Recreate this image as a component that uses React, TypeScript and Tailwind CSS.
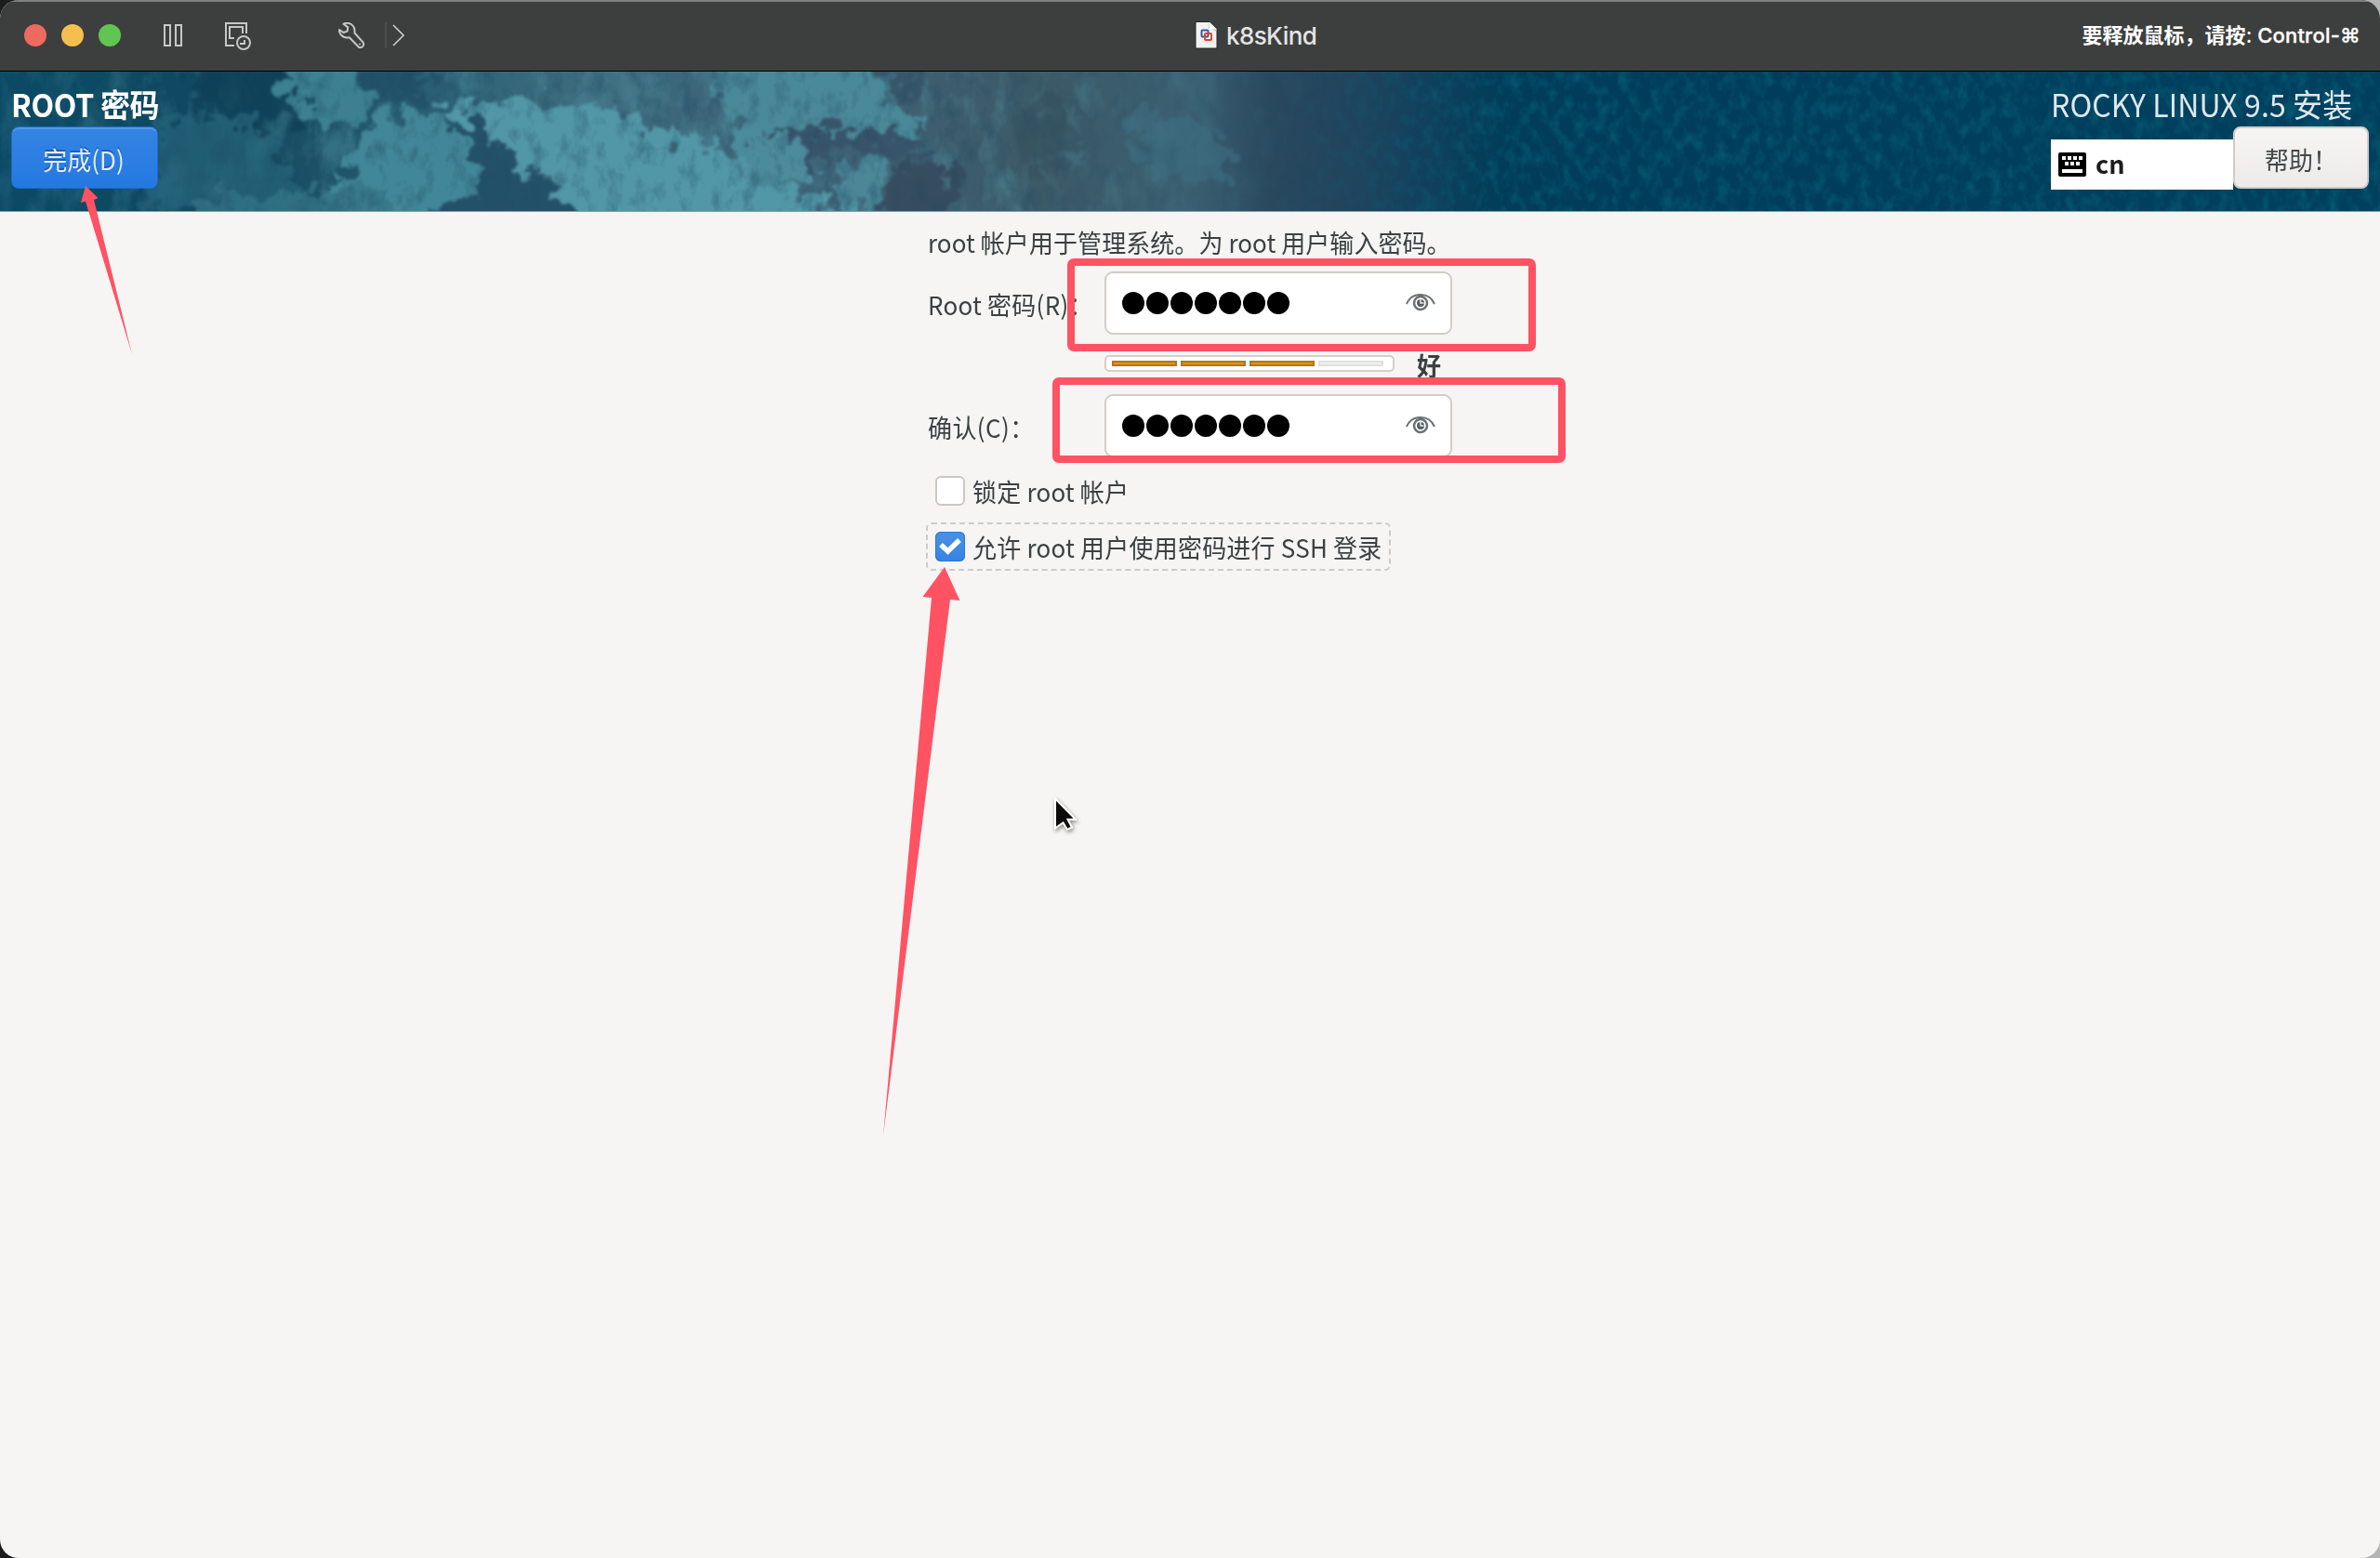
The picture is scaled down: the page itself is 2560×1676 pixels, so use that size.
import React from "react";

const CJK = "font-['Noto_Sans_CJK_SC',sans-serif]";

function BannerTexture() {
  return (
    <svg className="absolute inset-0 h-full w-full" viewBox="0 0 2560 150" preserveAspectRatio="none">
      <defs>
        <linearGradient id="sea" x1="0" x2="1" y1="0" y2="0">
          <stop offset="0" stopColor="#0b4a66" />
          <stop offset="0.05" stopColor="#0d4a62" />
          <stop offset="0.1" stopColor="#12475f" />
          <stop offset="0.16" stopColor="#245a70" />
          <stop offset="0.23" stopColor="#3a6b7d" />
          <stop offset="0.36" stopColor="#3f6174" />
          <stop offset="0.44" stopColor="#3c5966" />
          <stop offset="0.5" stopColor="#3b6072" />
          <stop offset="0.535" stopColor="#2a485d" />
          <stop offset="0.57" stopColor="#20445e" />
          <stop offset="0.63" stopColor="#013d59" />
          <stop offset="0.75" stopColor="#003d5d" />
          <stop offset="1" stopColor="#00405e" />
        </linearGradient>
        <linearGradient id="fadeRight" x1="0" x2="1" y1="0" y2="0">
          <stop offset="0.52" stopColor="#fff" stopOpacity="0" />
          <stop offset="0.64" stopColor="#fff" stopOpacity="1" />
        </linearGradient>
        <linearGradient id="fadeLeft" x1="0" x2="1" y1="0" y2="0">
          <stop offset="0" stopColor="#fff" stopOpacity="0.5" />
          <stop offset="0.15" stopColor="#fff" stopOpacity="1" />
          <stop offset="0.4" stopColor="#fff" stopOpacity="1" />
          <stop offset="0.56" stopColor="#fff" stopOpacity="0" />
        </linearGradient>
        <mask id="rightMask">
          <rect width="2560" height="150" fill="url(#fadeRight)" />
        </mask>
        <mask id="leftMask">
          <rect width="2560" height="150" fill="url(#fadeLeft)" />
        </mask>
        <filter id="rough" x="-5%" y="-30%" width="110%" height="160%" colorInterpolationFilters="sRGB">
          <feTurbulence type="fractalNoise" baseFrequency="0.045 0.05" numOctaves="5" seed="8" result="n" />
          <feDisplacementMap in="SourceGraphic" in2="n" scale="65" xChannelSelector="R" yChannelSelector="G" />
          <feGaussianBlur stdDeviation="1.6" />
        </filter>
        <filter id="grainLight" x="0" y="0" width="100%" height="100%" colorInterpolationFilters="sRGB">
          <feTurbulence type="fractalNoise" baseFrequency="0.035 0.02" numOctaves="5" seed="3" />
          <feColorMatrix values="0 0 0 0 0.32  0 0 0 0 0.58  0 0 0 0 0.64  3 0 0 0 -1.35" />
        </filter>
        <filter id="grainDark" x="0" y="0" width="100%" height="100%" colorInterpolationFilters="sRGB">
          <feTurbulence type="fractalNoise" baseFrequency="0.06 0.04" numOctaves="4" seed="14" />
          <feColorMatrix values="0 0 0 0 0.13  0 0 0 0 0.29  0 0 0 0 0.39  2.6 0 0 0 -1.25" />
        </filter>
        <filter id="speckle" x="0" y="0" width="100%" height="100%" colorInterpolationFilters="sRGB">
          <feTurbulence type="fractalNoise" baseFrequency="0.085 0.06" numOctaves="3" seed="21" />
          <feColorMatrix values="0 0 0 0 0.04  0 0 0 0 0.43  0 0 0 0 0.52  2.2 0 0 0 -0.9" />
        </filter>
      </defs>
      <rect width="2560" height="150" fill="url(#sea)" />
      <g mask="url(#leftMask)">
        <rect width="2560" height="150" filter="url(#grainLight)" opacity="0.45" />
      </g>
      <g filter="url(#rough)">
        <path d="M160 60L260 45 300 80 330 150 150 150Z" fill="#26667c" opacity="0.7" />
        <path d="M200 -40L300 -40 320 50 260 60 210 30Z" fill="#0d3f57" opacity="0.75" />
        <path d="M400 -40L470 -40 460 25 400 30Z" fill="#1f4e66" opacity="0.7" />
        <path d="M300 20L310 -40 385 -40 400 30 380 60 345 55Z" fill="#3c8092" />
        <path d="M365 120L400 60 440 35 480 50 520 90 530 110 500 150 430 165 420 200 370 200Z" fill="#428799" />
        <path d="M200 200L205 135 380 125 420 135 410 200Z" fill="#367588" opacity="0.75" />
        <path d="M468 40L540 30 640 35 720 65 790 85 840 120 920 150 930 210 610 210 595 110 540 90 510 70Z" fill="#5297a7" />
        <path d="M775 -40L930 -40 960 40 1000 75 950 65 880 60 800 60 770 30Z" fill="#4a8999" />
        <path d="M790 50L860 70 885 100 860 120 810 120Z" fill="#4c8b9b" />
        <path d="M900 95L950 90 945 135 915 150 895 120Z" fill="#4a8797" />
        <path d="M640 -40L690 -40 680 30 620 40Z" fill="#427587" opacity="0.6" />
        <path d="M478 45L500 50 555 95 590 115 612 150 612 210 440 210 440 160 500 135 520 130 515 95Z" fill="#24516a" />
        <path d="M970 95L1010 90 1025 130 1020 210 935 210 950 130Z" fill="#364d60" />
        <path d="M830 60L960 60 1000 90 960 88 900 76 880 100 872 130 862 78Z" fill="#38546a" />
        <path d="M940 -40L970 -40 990 40 960 20Z" fill="#37566a" />
        <path d="M1090 40L1150 30 1160 90 1110 110Z" fill="#36505e" opacity="0.6" />
        <path d="M1210 40L1300 50 1330 100 1290 120 1230 110Z" fill="#3e6e82" opacity="0.6" />
      </g>
      <g mask="url(#leftMask)">
        <rect width="2560" height="150" filter="url(#grainDark)" opacity="0.4" />
      </g>
      <g mask="url(#rightMask)">
        <rect width="2560" height="150" filter="url(#speckle)" opacity="0.5" />
      </g>
    </svg>
  );
}

function TitleBar() {
  return (
    <header className="relative flex h-[77px] shrink-0 items-center border-b border-black bg-[#3d3f3e] shadow-[inset_0_2px_0_#7e8180]">
      <div className="ml-[26px] flex gap-4">
        <span className="size-6 rounded-full bg-[#ed6a5f]" />
        <span className="size-6 rounded-full bg-[#f5bf4f]" />
        <span className="size-6 rounded-full bg-[#61c554]" />
      </div>
      <svg className="ml-[46px] h-6 w-5" viewBox="0 0 20 24" fill="none" stroke="#c6c7c7" strokeWidth="2">
        <path d="M1 1H7V23H1ZM13 1H19V23H13Z" />
      </svg>
      <svg className="mt-0.5 ml-[46px] h-[30px] w-7" viewBox="0 0 28 30" fill="none" stroke="#c6c7c7" strokeWidth="2">
        <path d="M10 25H1V1H23V12" />
        <path d="M19 12V5H5V17H10" />
        <circle cx="20" cy="22" r="7" />
        <path d="M21 19V23H16" />
      </svg>
      <svg className="ml-[94px] h-7 w-7" viewBox="0 0 28 28" fill="none" stroke="#c6c7c7" strokeWidth="2" strokeLinejoin="round">
        <path d="M5.500 1.600C9.500 .2 14 1 16.500 5C17.800 7.600 17.600 9.400 17.400 11.500L26.200 21.200C27.600 23 27.200 25.300 25.600 26.400C24.200 27.400 22.200 27.200 21 25.800L11.800 16.200C8.500 17 5.200 16.200 3 13.700C1.400 11.800 .8 10 1 8L5.500 11L9.600 9.600L10.200 5.400Z" />
        <circle cx="23" cy="23.500" r="1" fill="#c6c7c7" stroke="none" />
      </svg>
      <span className="ml-[22px] h-7 w-0.5 bg-[#4b4d4c]" />
      <svg className="ml-[5px] h-6 w-4" viewBox="0 0 16 24" fill="none" stroke="#d0d1d1" strokeWidth="1.500">
        <path d="M2 1L13 12L2 23" />
      </svg>
      <div className="ml-[848px] flex items-center">
        <svg className="mr-2 h-8 w-[26px]" viewBox="0 0 26 32">
          <path d="M1 1.500H16L24 9.500V30H1Z" fill="#f2f2f2" stroke="#232524" strokeWidth="1" />
          <path d="M16 1.500L24 9.500V12L15 8Z" fill="#8b8b8b" opacity=".5" />
          <path d="M16 2V9.500H24Z" fill="#fff" />
          <rect x="7.500" y="10.500" width="7" height="7" rx="1" fill="none" stroke="#2d5fa8" strokeWidth="2" />
          <rect x="11" y="14" width="7" height="7" rx="1" fill="none" stroke="#e8402a" strokeWidth="2" />
        </svg>
        <span className="pt-px font-['Inter',sans-serif] text-[26px] leading-none font-medium tracking-[-0.600px] text-[#e4e5e5]">
          k8sKind
        </span>
      </div>
      <span className="mr-[21px] ml-auto font-['Inter','Noto_Sans_CJK_SC',sans-serif] text-[22px] leading-none font-medium whitespace-pre text-white">
        <span className="font-semibold">要释放鼠标，请按</span>: <span className="tracking-[0.200px] [-webkit-text-stroke:0.300px_white]">Control-⌘</span>
      </span>
    </header>
  );
}

function KeyboardIcon() {
  return (
    <svg className="h-[26px] w-[30px]" viewBox="0 0 30 26">
      <rect width="30" height="26" rx="2" fill="#000" />
      <path
        d="M4 4h4v4h-4zM10 4h4v4h-4zM16 4h4v4h-4zM22 4h4v4h-4zM7 10h4v4h-4zM13 10h4v4h-4zM19 10h4v4h-4zM4 18h22v4h-22z"
        fill="#fff"
      />
    </svg>
  );
}

function Banner() {
  return (
    <div className={`relative h-[151px] shrink-0 overflow-hidden ${CJK}`}>
      <BannerTexture />
      <div className="relative flex h-full justify-between pr-3 pl-3">
        <div className="flex w-[158px] flex-col">
          <h1 className="flex h-[59px] items-center pt-[9px] text-[32px] leading-none font-bold whitespace-nowrap text-white">
            <span className="origin-left scale-y-[1.060] tracking-[-0.300px]">ROOT 密码</span>
          </h1>
          <button className="flex h-[67px] items-center justify-center rounded-[8px] border border-[#1b6acb] bg-linear-to-b from-[#3584e4] to-[#2379e2] pt-[2px] pr-[2px] text-[26px] text-[#e4edf9] shadow-[inset_0_2px_0_#5496e8] [text-shadow:0_-2px_0_#1b5fb4]">
            <span className="scale-y-[1.060] font-normal">完成(D)</span>
          </button>
        </div>
        <div className="flex w-[342px] flex-col">
          <h2 className="flex h-[59px] items-center pt-[9px] text-[32px] leading-none font-normal whitespace-nowrap text-[#dfe7ec]">
            <span className="origin-left scale-y-[1.060] tracking-[0.100px]">ROCKY LINUX 9.5 安装</span>
          </h2>
          <div className="flex">
            <div className="mt-[14px] flex h-[54px] w-[196px] items-center bg-white pl-2">
              <KeyboardIcon />
              <span className="-mt-[3px] ml-[10px] text-[27px] leading-none font-bold text-[#1c1c1c]">cn</span>
            </div>
            <button className="flex h-[67px] w-[146px] items-center justify-center rounded-[8px] border-2 border-[#d2cbc5] bg-linear-to-b from-[#f6f5f4] to-[#edebe9] pt-[2px] text-[26px] text-[#42484a]">
              <span className="scale-y-[1.060] font-normal">帮助！</span>
            </button>
          </div>
        </div>
      </div>
      <div className="absolute inset-x-0 bottom-0 h-px bg-[#7fa0ae]" />
    </div>
  );
}

function EyeIcon() {
  return (
    <svg className="-mt-[2px] h-5 w-8" viewBox="0 0 32 20" fill="none" stroke="#6a7072">
      <path d="M1 12C4 5 9 2 16 2C23 2 28 5 31 12" strokeWidth="2" />
      <circle cx="16" cy="11" r="7" strokeWidth="2.500" />
      <circle cx="16" cy="11" r="4" fill="#565c5e" stroke="none" />
      <path d="M16 7V11H19.500" stroke="#e8e9e9" strokeWidth="1.500" />
    </svg>
  );
}

function PasswordField() {
  return (
    <div className="flex h-[68px] w-[374px] items-center rounded-[9px] border-2 border-[#d2cdc7] bg-white pr-4 pl-[17px]">
      <div className="flex flex-1 gap-[2px]">
        {[0, 1, 2, 3, 4, 5, 6].map((i) => (
          <span key={i} className="size-6 rounded-full bg-black" />
        ))}
      </div>
      <EyeIcon />
    </div>
  );
}

function StrengthBar() {
  return (
    <div className="flex h-[18px] w-[312px] items-center gap-1 rounded-[5px] border-2 border-[#d4cfc9] bg-white px-1.5">
      {[0, 1, 2].map((i) => (
        <span key={i} className="h-[6px] w-[70px] border-2 border-[#b0761a] bg-[#e5960d]" />
      ))}
      <span className="h-[6px] w-[70px] border-2 border-[#dfe1df] bg-[#f0f1f0]" />
    </div>
  );
}

function RootPasswordForm() {
  return (
    <main className={`mx-auto w-[564px] text-[26px] leading-none text-[#3b4143] ${CJK}`}>
      <p className="flex h-16 items-center tracking-[0.070px] whitespace-nowrap">
        <span className="origin-left scale-y-[1.060]">root 帐户用于管理系统。为 root 用户输入密码。</span>
      </p>
      <div className="flex h-[68px] items-center">
        <label className="w-[190px] origin-left scale-y-[1.060] pt-px tracking-[0.250px] whitespace-nowrap">Root 密码(R)：</label>
        <PasswordField />
      </div>
      <div className="flex h-16 items-center pl-[190px]">
        <div className="-mt-[2px]">
          <StrengthBar />
        </div>
        <span className="ml-6 scale-y-[1.060] font-bold">好</span>
      </div>
      <div className="flex h-[68px] items-center">
        <label className="w-[190px] origin-left scale-y-[1.060] pt-px tracking-[0.400px] whitespace-nowrap">确认(C)：</label>
        <PasswordField />
      </div>
      <div className="mt-5 flex h-8 items-center pl-2">
        <span className="size-8 rounded-[6px] border-2 border-[#cdc7c2] bg-white" />
        <span className="ml-2 origin-left scale-y-[1.060] tracking-[0.200px]">锁定 root 帐户</span>
      </div>
      <div className="mt-[18px] -ml-[2px] flex h-[52px] w-[500px] items-center rounded-[6px] border-2 border-dashed border-[#cbccca] pl-2">
        <span className="flex size-8 items-center justify-center rounded-[6px] bg-linear-to-b from-[#4a90e6] to-[#3584e4] shadow-[inset_0_0_0_1px_#2a76d3]">
          <svg className="h-6 w-6" viewBox="0 0 24 24" fill="none" stroke="#fff" strokeWidth="5.500">
            <path d="M2 10L9.500 17L22 5" />
          </svg>
        </span>
        <span className="ml-2 origin-left scale-y-[1.060] tracking-[0.220px] whitespace-nowrap">
          允许 root 用户使用密码进行 SSH 登录
        </span>
      </div>
    </main>
  );
}

function Annotations() {
  return (
    <>
      <div className="absolute top-[278px] left-[1148px] h-[100px] w-[504px] rounded-[7px] border-8 border-[#ff5263]" />
      <div className="absolute top-[406px] left-[1132px] h-[92px] w-[552px] rounded-[7px] border-8 border-[#ff5263]" />
      <svg className="absolute top-[200px] left-[87px] h-[181px] w-[55px]" viewBox="0 0 55 181" fill="#ff5263">
        <path d="M5 0L18.500 13L14 15L55 181L5 16.500L0 18Z" />
      </svg>
      <svg className="absolute top-[610px] left-[950px] h-[612px] w-[83px]" viewBox="0 0 83 612" fill="#ff5263">
        <path d="M66 0L82.500 36L72 35L0 612L52 33L42.500 32Z" />
      </svg>
      <svg
        className="absolute top-[857px] left-[1133px] h-[42px] w-[30px] drop-shadow-[1px_2px_2px_rgba(0,0,0,0.450)]"
        viewBox="0 0 30 42"
      >
        <path d="M2 2L24 24.500H15.500L20 33L15 35.500L10.500 28L2 34Z" fill="#0b0b0b" stroke="#fff" strokeWidth="2" />
      </svg>
    </>
  );
}

export default function App() {
  return (
    <div className="h-[1676px] w-[2560px] overflow-hidden bg-linear-to-r from-[#1c1c1c] from-50% to-[#b4b4b4] to-50%">
      <div className="relative flex h-full w-full flex-col overflow-hidden rounded-[20px] bg-[#f6f5f4]">
        <TitleBar />
        <Banner />
        <RootPasswordForm />
        <Annotations />
      </div>
    </div>
  );
}
